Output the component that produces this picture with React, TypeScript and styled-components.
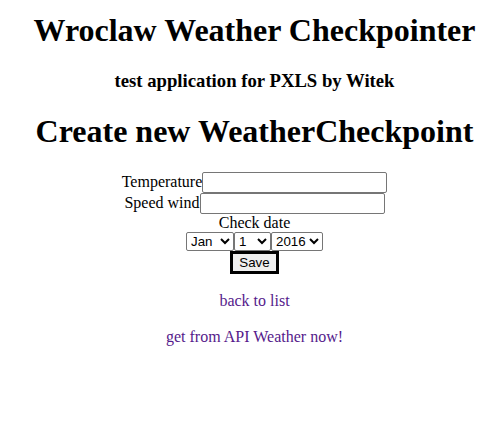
import React from "react";
import styled, { createGlobalStyle } from "styled-components";

const Global = createGlobalStyle`
  html, body { margin: 0; padding: 0; background: #fff; }
  body { margin: 8px; font-family: "Liberation Serif", "Times New Roman", serif; font-size: 16px; color: #000; }
`;

const Page = styled.div`
  text-align: center;
  padding-left: 12px;
`;

const Title = styled.h1<{ $first?: boolean }>`
  font-size: 32px;
  font-weight: bold;
  margin: ${(p) => (p.$first ? "3.5px" : "21.44px")} 0 21.44px;
`;

const Subtitle = styled.h3`
  font-size: 18.72px;
  font-weight: bold;
  margin: 18.72px 0;
`;

const Form = styled.form`
  margin: 0;
`;

const Row = styled.div`
  line-height: normal;
`;

const TextInput = styled.input`
  font: 13.3333px "Liberation Sans", Arial, sans-serif;
  padding: 1px 2px;
  border: 1px solid #767676;
  border-radius: 2px;
  width: 179px;
  height: 17px;
  box-sizing: content-box;
  vertical-align: baseline;
`;

const Select = styled.select`
  font: 13.3333px "Liberation Sans", Arial, sans-serif;
  border: 1px solid #767676;
  border-radius: 2px;
  background: #fff;
  color: #000;
`;

const SaveButton = styled.button`
  font: 13.3333px "Liberation Sans", Arial, sans-serif;
  background: #efefef;
  border: 3px solid #000;
  border-radius: 0;
  padding: 1px 6px;
  color: #000;
`;

const Para = styled.p`
  margin: 18px 0;
`;

const Link = styled.a`
  color: #551a8b;
  text-decoration: none;
`;

const months = ["Jan","Feb","Mar","Apr","May","Jun","Jul","Aug","Sep","Oct","Nov","Dec"];

export default function App() {
  return (
    <Page>
      <Global />
      <Title $first>Wroclaw Weather Checkpointer</Title>
      <Subtitle>test application for PXLS by Witek</Subtitle>
      <Title>Create new WeatherCheckpoint</Title>
      <Form onSubmit={(e) => e.preventDefault()}>
        <Row>
          <label>Temperature</label>
          <TextInput type="text" />
        </Row>
        <Row>
          <label>Speed wind</label>
          <TextInput type="text" />
        </Row>
        <Row>Check date</Row>
        <Row>
          <Select defaultValue="Jan">
            {months.map((m) => (
              <option key={m}>{m}</option>
            ))}
          </Select>
          <Select defaultValue="1">
            {Array.from({ length: 31 }, (_, i) => (
              <option key={i}>{i + 1}</option>
            ))}
          </Select>
          <Select defaultValue="2016">
            {["2015", "2016", "2017"].map((y) => (
              <option key={y}>{y}</option>
            ))}
          </Select>
        </Row>
        <Row>
          <SaveButton type="submit">Save</SaveButton>
        </Row>
      </Form>
      <Para>
        <Link href="#">back to list</Link>
      </Para>
      <Para>
        <Link href="#">get from API Weather now!</Link>
      </Para>
    </Page>
  );
}
